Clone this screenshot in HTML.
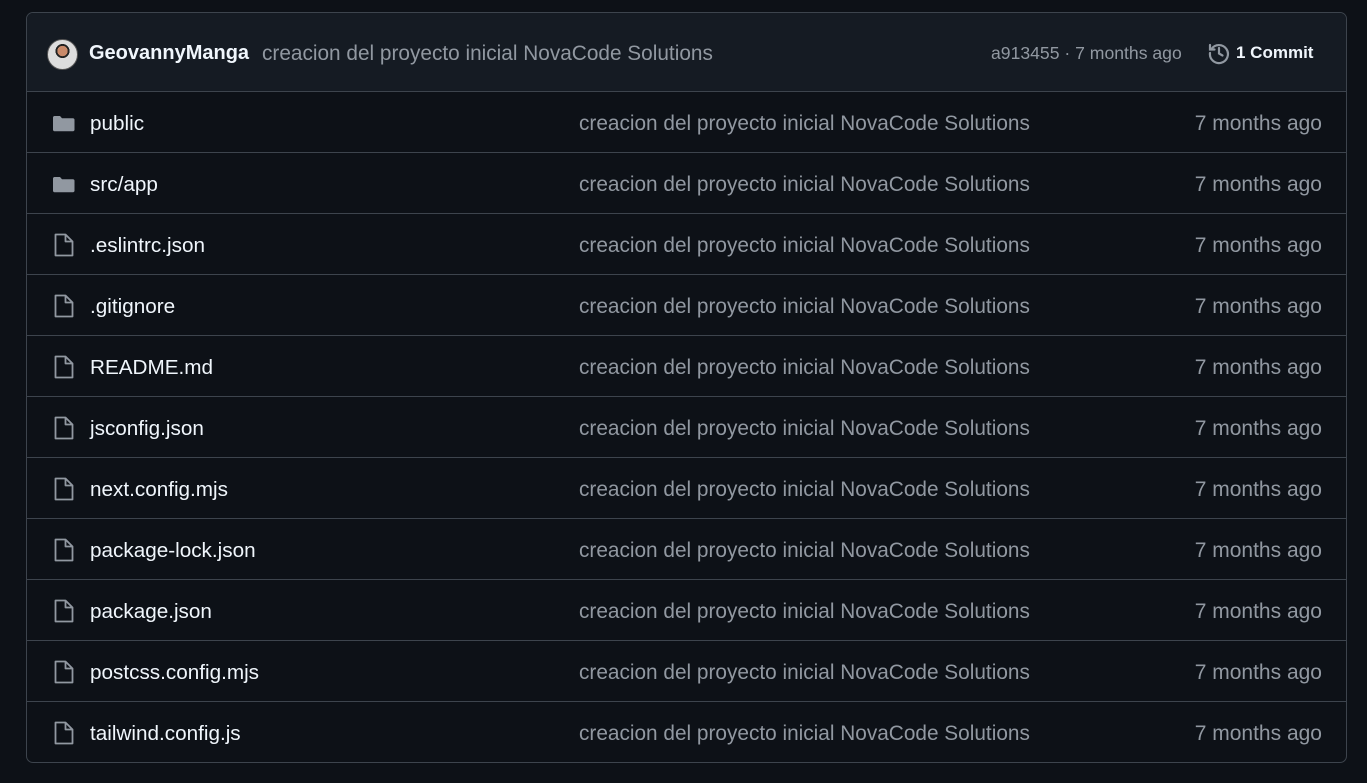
<!DOCTYPE html>
<html><head><meta charset="utf-8"><style>
*{box-sizing:border-box;margin:0;padding:0}
body{width:1367px;height:783px;background:#0d1117;font-family:"Liberation Sans",sans-serif;color:#f0f6fc;overflow:hidden}
.box{position:absolute;left:26px;top:12px;width:1321px;height:751px;border:1px solid #3d444d;border-radius:7px;overflow:hidden}
.hdr{height:79px;background:#151b23;border-bottom:1px solid #3d444d;position:relative}
.av{position:absolute;left:20px;top:26px;width:31px;height:31px;border-radius:50%;background:radial-gradient(circle at 50% 38%,#c98a6a 0 22%,#222 23% 30%,#ddd 31%);border:1px solid #555}
.user{position:absolute;left:62px;top:29px;font-weight:bold;font-size:20px}
.msg{position:absolute;left:235px;top:29px;font-size:20.8px;color:#9198a1}
.sha{position:absolute;left:964px;top:30px;font-size:17.6px;color:#9198a1}
.cm{position:absolute;left:1180px;top:28px;font-size:17px;font-weight:bold;display:flex;align-items:center;gap:5px}
.row{height:61px;border-bottom:1px solid #3d444d;position:relative;font-size:20.7px}
.row:last-child{border-bottom:none}
.ic{position:absolute;left:23px;top:17px}
.nm{position:absolute;left:63px;top:20px}
.c{position:absolute;left:552px;top:20px;color:#9198a1;font-size:20.8px}
.t{position:absolute;right:24px;top:20px;color:#9198a1;font-size:21px}
</style></head><body><div class="box">
<div class="hdr"><div class="av"></div><div class="user">GeovannyManga</div><div class="msg">creacion del proyecto inicial NovaCode Solutions</div><div class="sha">a913455 · 7 months ago</div>
<div class="cm"><svg width="24" height="24" viewBox="0 0 24 24" fill="none" stroke="#9198a1" stroke-width="2.2" stroke-linecap="round"><path d="M4.5 8A9 9 0 1 1 3 12"/><path d="M3 4v4.5h4.5"/><path d="M12 7v5.5l3.5 2"/></svg>1 Commit</div></div>
<div id="rows"></div>
</div>
<script>
var f=[["public",1],["src/app",1],[".eslintrc.json"],[".gitignore"],["README.md"],["jsconfig.json"],["next.config.mjs"],["package-lock.json"],["package.json"],["postcss.config.mjs"],["tailwind.config.js"]];
var folder='<svg width="28" height="28" viewBox="0 0 28 28"><path d="M3 8.5C3 7.7 3.7 7 4.5 7H10l2 2.3h11c.8 0 1.5.7 1.5 1.5v10c0 .8-.7 1.5-1.5 1.5H4.5C3.7 22.3 3 21.6 3 20.8z" fill="#9198a1"/></svg>';
var file='<svg width="28" height="28" viewBox="0 0 28 28" fill="none" stroke="#9198a1" stroke-width="1.8" stroke-linejoin="round"><path d="M5.5 3.5h10L22.5 10.5v14h-17z"/><path d="M15.5 3.5v7h7"/></svg>';
var h='';f.forEach(function(r){h+='<div class="row"><div class="ic">'+(r[1]?folder:file)+'</div><div class="nm">'+r[0]+'</div><div class="c">creacion del proyecto inicial NovaCode Solutions</div><div class="t">7 months ago</div></div>';});
document.getElementById('rows').innerHTML=h;
</script>
</body></html>
